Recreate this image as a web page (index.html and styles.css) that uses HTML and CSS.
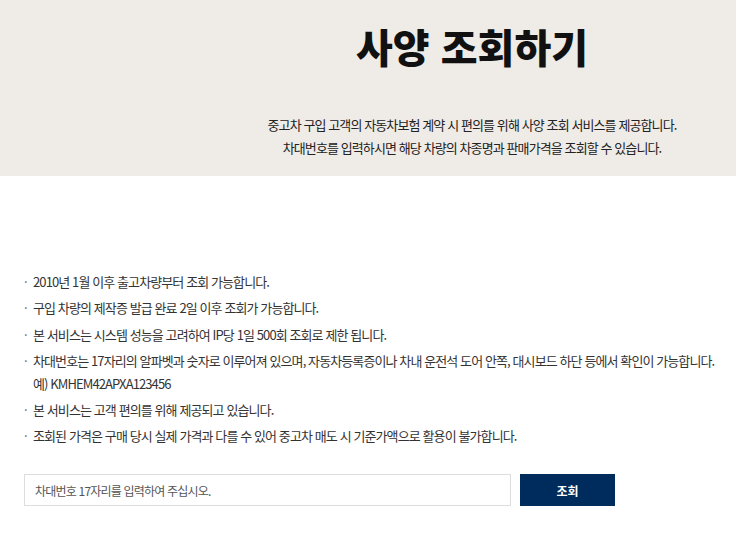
FILE: index.html
```html
<!DOCTYPE html>
<html lang="ko">
<head>
<meta charset="utf-8">
<title>사양 조회하기</title>
<link rel="stylesheet" href="styles.css">
</head>
<body>
<header class="hero">
  <div class="hero-inner">
    <h1 class="hero-title">사양 조회하기</h1>
    <p class="hero-desc">중고차 구입 고객의 자동차보험 계약 시 편의를 위해 사양 조회 서비스를 제공합니다.<br>차대번호를 입력하시면 해당 차량의 차종명과 판매가격을 조회할 수 있습니다.</p>
  </div>
</header>
<main class="content">
  <ul class="notes">
    <li><span>2010년 1월 이후 출고차량부터 조회 가능합니다.</span></li>
    <li><span>구입 차량의 제작증 발급 완료 2일 이후 조회가 가능합니다.</span></li>
    <li><span>본 서비스는 시스템 성능을 고려하여 IP당 1일 500회 조회로 제한 됩니다.</span></li>
    <li><span>차대번호는 17자리의 알파벳과 숫자로 이루어져 있으며, 자동차등록증이나 차내 운전석 도어 안쪽, 대시보드 하단 등에서 확인이 가능합니다.<br>예) KMHEM42APXA123456</span></li>
    <li><span>본 서비스는 고객 편의를 위해 제공되고 있습니다.</span></li>
    <li><span>조회된 가격은 구매 당시 실제 가격과 다를 수 있어 중고차 매도 시 기준가액으로 활용이 불가합니다.</span></li>
  </ul>
  <form class="search" onsubmit="return false;">
    <input class="search-input" type="text" placeholder="차대번호 17자리를 입력하여 주십시오.">
    <button class="search-btn" type="submit">조회</button>
  </form>
</main>
</body>
</html>
```
FILE: styles.css
```css
* { box-sizing: border-box; }
html, body { margin: 0; padding: 0; background: #fff; }
body {
  font-family: "Noto Sans CJK KR", "Noto Sans", sans-serif;
  color: #333;
}
.hero {
  background: #efebe7;
  height: 176px;
}
.hero-inner {
  padding: 22px 0 0 208px;
  text-align: center;
}
.hero-title {
  margin: 0;
  font-size: 40px;
  line-height: 48px;
  font-weight: 900;
  letter-spacing: 0;
  color: #111;
}
.hero-desc {
  margin: 43px 0 0;
  font-size: 13px;
  line-height: 23px;
  letter-spacing: -0.9px;
  color: #222;
}
.content {
  padding: 94px 8px 0 24px;
}
.notes {
  list-style: none;
  margin: 0;
  padding: 0;
  font-size: 13px;
  line-height: 23px;
  letter-spacing: -0.9px;
  color: #333;
}
.notes li {
  display: flex;
  margin-bottom: 3.3px;
}
.notes li::before {
  content: "·";
  flex: 0 0 9px;
  color: #666;
}
.search {
  display: flex;
  gap: 9px;
  margin-top: 27px;
}
.search-input {
  width: 487px;
  height: 32px;
  border: 1px solid #ddd;
  padding: 0 10px;
  font-family: inherit;
  font-size: 12px;
  letter-spacing: -0.8px;
  color: #444;
  outline: none;
}
.search-input::placeholder { color: #555; }
.search-btn {
  width: 95px;
  height: 32px;
  border: 0;
  background: #002c5d;
  color: #fff;
  font-family: inherit;
  font-size: 12px;
  font-weight: 700;
  cursor: pointer;
}
```
